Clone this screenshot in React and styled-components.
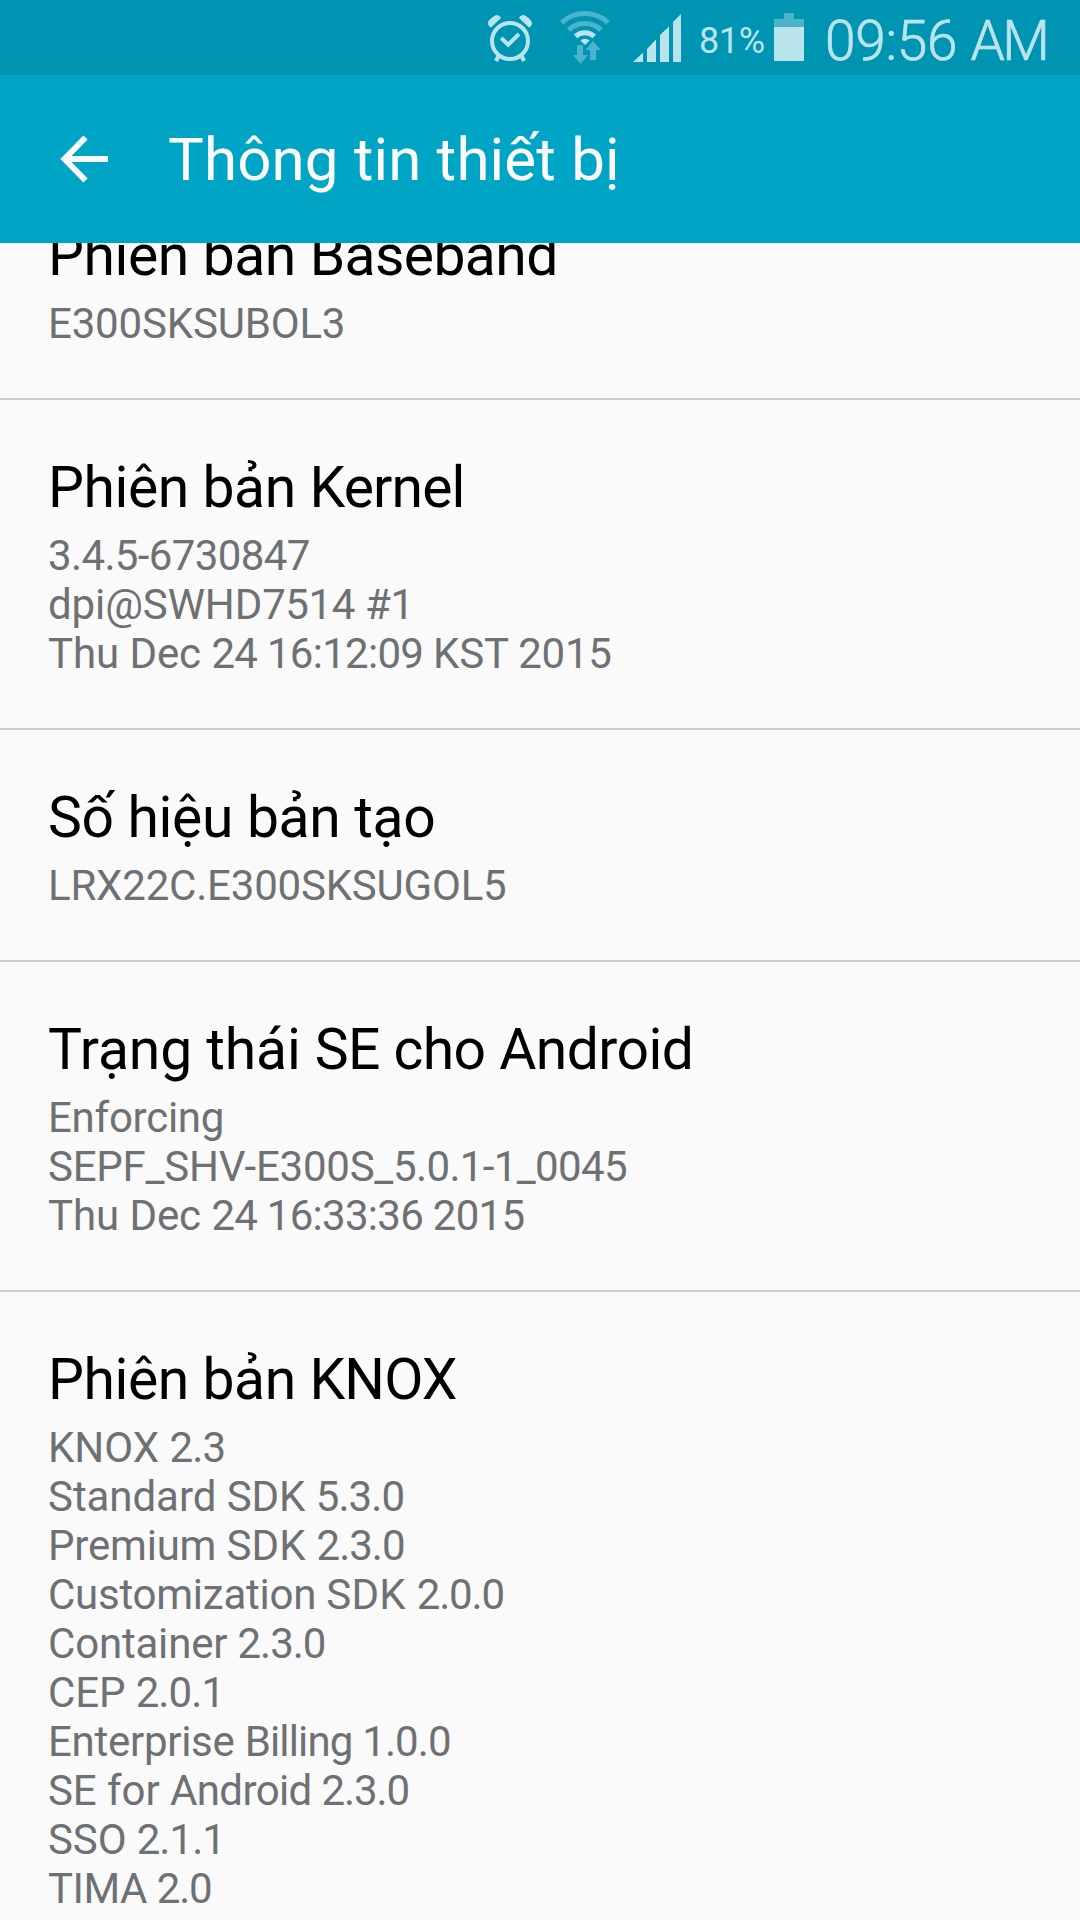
import React from "react";
import styled, { createGlobalStyle } from "styled-components";

const GlobalStyle = createGlobalStyle`
  *, *::before, *::after { box-sizing: border-box; }
  body { margin: 0; background: #fafafa; }
`;

const Screen = styled.div`
  display: flex;
  flex-direction: column;
  width: 1080px;
  height: 1920px;
  overflow: hidden;
  background: #fafafa;
  font-family: Roboto, "Liberation Sans", sans-serif;
  font-weight: 400;
`;

const StatusBar = styled.div`
  display: flex;
  flex: none;
  justify-content: flex-end;
  height: 75px;
  padding-right: 31px;
  background: #0094b3;
  color: #bae4ec;
`;

const StatusIcon = styled.svg`
  flex: none;
  display: block;
  width: ${(p) => p.$width}px;
  height: 75px;
  margin-right: ${(p) => p.$gap}px;
`;

const Percent = styled.span`
  width: 67px;
  margin-right: 8px;
  font-size: 36px;
  line-height: 82px;
  letter-spacing: -0.4px;
  white-space: nowrap;
`;

const Clock = styled.span`
  width: 224px;
  font-size: 55px;
  font-weight: 300;
  line-height: 82px;
  white-space: pre;
  -webkit-text-stroke: 0.7px currentColor;
`;

const AppBar = styled.header`
  display: flex;
  flex: none;
  align-items: center;
  height: 168px;
  padding: 0 60px;
  background: #00a5c6;
  color: #fafafa;
`;

const BackIcon = styled.svg`
  flex: none;
  display: block;
  width: 48px;
  height: 48px;
  margin-right: 60px;
`;

const Heading = styled.h1`
  margin: 0;
  padding-top: 1px;
  font-size: 60px;
  font-weight: 400;
  line-height: 71px;
  letter-spacing: 0.16px;
  white-space: nowrap;
`;

const Viewport = styled.main`
  flex: 1;
  min-height: 0;
  overflow: hidden;
`;

const List = styled.div`
  display: flex;
  flex-direction: column;
  margin-top: -75px;
`;

const Item = styled.section`
  padding: 54px 48px 50px;
  border-bottom: 2px solid #cdcdcd;
`;

const Title = styled.h2`
  margin: 0 0 10px;
  color: #000;
  font-size: 57px;
  font-weight: 400;
  line-height: 67px;
  white-space: pre;
`;

const Summary = styled.div`
  color: #6e7174;
  font-size: 42px;
  line-height: 49px;
  white-space: pre;
`;

const Run = styled.span`
  letter-spacing: ${(p) => p.$tracking}px;
`;

/* Each line is a list of [text, tracking] runs. */
const entries = [
  {
    title: [["Phiên bản ", -0.4], ["Baseband", -0.6]],
    lines: [[["E300SKSUBOL3", -0.18]]],
  },
  {
    title: [["Phiên bản ", -0.42], ["Kernel", -0.85]],
    lines: [
      [["3.4.5-6730847", -0.63]],
      [["dpi@SWHD", -0.1], ["7514 #1", -0.4]],
      [["Thu Dec ", -0.08], ["24 16:12:09 ", -0.7], ["KST 2015", -0.2]],
    ],
  },
  {
    title: [["Số hiệu bản tạo", -0.33]],
    lines: [[["LRX22C.E300SKSUGOL5", -0.2]]],
  },
  {
    title: [["Trạng thái ", -0.1], ["SE cho Android", -0.54]],
    lines: [
      [["Enforcing", -0.26]],
      [["SEPF_SHV-E300S_", -0.23], ["5.0.1-1_0045", -0.65]],
      [["Thu Dec ", -0.08], ["24 16:33:36 2015", -0.72]],
    ],
  },
  {
    title: [["Phiên bản ", -0.42], ["KNOX", -0.9]],
    lines: [
      [["KNOX ", 0], ["2.3", -0.9]],
      [["Standard SDK ", -0.06], ["5.3.0", -0.9]],
      [["Premium ", -0.2], ["SDK ", 0.2], ["2.3.0", -1]],
      [["Customization ", -0.24], ["SDK ", 0.25], ["2.0.0", -1.1]],
      [["Container ", -0.19], ["2.3.0", -1]],
      [["CEP ", -0.12], ["2.0.1", -0.9]],
      [["Enterprise ", -0.28], ["Billing ", -0.84], ["1.0.0", -0.85]],
      [["SE for ", -0.07], ["Android ", -0.6], ["2.3.0", -1.1]],
      [["SSO ", -0.12], ["2.1.1", -0.95]],
      [["TIMA ", -0.5], ["2.0", -1.3]],
    ],
  },
];

function Runs({ runs }) {
  return runs.map(([text, tracking]) => (
    <Run key={text} $tracking={tracking}>
      {text}
    </Run>
  ));
}

const DIM = "#4bb3ca";

function AlarmIcon() {
  return (
    <StatusIcon $width={44} $gap={28} viewBox="0 0 44 75" fill="none" stroke="currentColor">
      <circle cx="22" cy="41" r="18" strokeWidth="4" />
      <path d="M13.2 38l7 6.6L31 34" strokeWidth="4" />
      <path d="M11 55l-3 6M33 55l3 6" strokeWidth="4" />
      <path d="M0 22.5c0-2 7-8.200 9-7.500 2 .3 3.500 1.500 4 3L3 27.500C1 27 0 25 0 22.500z" fill="currentColor" stroke="none" />
      <path d="M44 22.500c0-2-7-8.200-9-7.500-2 .3-3.500 1.500-4 3l10 9.500C43 27 44 25 44 22.500z" fill="currentColor" stroke="none" />
    </StatusIcon>
  );
}

function WifiIcon() {
  return (
    <StatusIcon $width={50} $gap={23} viewBox="0 0 50 75" fill="none" stroke="currentColor">
      <path d="M1.600 22.600a34 34 0 0 1 46.400 0" stroke={DIM} strokeWidth="5" />
      <path d="M8.600 29.800a24 24 0 0 1 32.500 0" stroke={DIM} strokeWidth="5" />
      <path d="M15.500 36.300a14 14 0 0 1 18.800 0" strokeWidth="5" />
      <path d="M20.300 40.500a7 7 0 0 1 9.400 0L25 45z" fill="currentColor" stroke="none" />
      <path d="M17 45h6v10h5L20.500 64 13 55h4z" fill={DIM} stroke="none" />
      <path d="M30 60h6V50h4.500L33 41l-7.500 9H30z" fill={DIM} stroke="none" />
    </StatusIcon>
  );
}

function SignalIcon() {
  return (
    <StatusIcon $width={48} $gap={18} viewBox="0 0 48 75" fill="currentColor">
      <path d="M0 62l10-9.500V62zM14 62V49l9-9.500V62zM27 62V35l9-8.500V62zM40 62V22l8-8V62z" />
    </StatusIcon>
  );
}

function BatteryIcon() {
  return (
    <StatusIcon $width={30} $gap={21} viewBox="0 0 30 75" fill="currentColor">
      <path d="M10 13h10v6h10v8H0v-8h10z" fill={DIM} />
      <path d="M0 27h30v34H0z" />
    </StatusIcon>
  );
}

export default function App() {
  return (
    <Screen>
      <GlobalStyle />
      <StatusBar>
        <AlarmIcon />
        <WifiIcon />
        <SignalIcon />
        <Percent>81%</Percent>
        <BatteryIcon />
        <Clock>
          <Runs runs={[["09:56 ", -0.25], ["AM", -2.5]]} />
        </Clock>
      </StatusBar>
      <AppBar>
        <BackIcon viewBox="0 0 48 48" fill="none" stroke="currentColor" strokeWidth="6">
          <path d="M25.500 2.500L4.500 24l21 21.500M6 24h42" />
        </BackIcon>
        <Heading>Thông tin thiết bị</Heading>
      </AppBar>
      <Viewport>
        <List>
          {entries.map((entry, i) => (
            <Item key={i}>
              <Title>
                <Runs runs={entry.title} />
              </Title>
              <Summary>
                {entry.lines.map((line, j) => (
                  <div key={j}>
                    <Runs runs={line} />
                  </div>
                ))}
              </Summary>
            </Item>
          ))}
        </List>
      </Viewport>
    </Screen>
  );
}
